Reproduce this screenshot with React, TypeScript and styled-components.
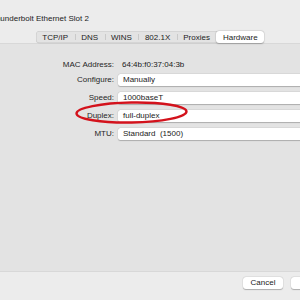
import * as React from 'react';
import styled, { createGlobalStyle } from 'styled-components';

const GlobalStyle = createGlobalStyle`
    html, body {
        margin: 0;
        padding: 0;
        background: #ececec;
        overflow: hidden;
    }
    body {
        font-family: "Liberation Sans", Arial, sans-serif;
    }
`;

const Viewport = styled.div`
    width: 300px;
    height: 300px;
    overflow: hidden;
    position: relative;
`;

// the sheet is wider than the shot: it is cut on both sides
const Sheet = styled.div`
    position: relative;
    width: 380px;
    height: 300px;
    margin-left: -40px;
    background: #ececec;
    display: flex;
    flex-direction: column;
`;

const TitleBar = styled.div`
    height: 31px;
    padding: 13px 0 0 31px;
    box-sizing: border-box;
    font-size: 8px;
    line-height: 12px;
    color: #222222;
    white-space: nowrap;
`;

const TabRow = styled.div`
    display: flex;
    justify-content: center;
    height: 13px;
    margin-bottom: -1px;
    position: relative;
    z-index: 1;
`;

const Segmented = styled.div`
    display: flex;
    align-items: center;
    height: 12px;
    background: #e3e3e3;
    border-radius: 3.5px;
    box-shadow: inset 0 0 0 0.5px rgba(0, 0, 0, 0.12), 0 0.5px 0.5px rgba(0, 0, 0, 0.08);
`;

const Segment = styled.div<{ $active?: boolean; $divider?: boolean }>`
    position: relative;
    height: 12px;
    padding: 0 6.5px;
    display: flex;
    align-items: center;
    font-size: 8px;
    color: #1c1c1c;
    border-radius: 3px;
    background: ${p => p.$active ? '#ffffff' : 'transparent'};
    box-shadow: ${p => p.$active ? '0 0.5px 1.5px rgba(0,0,0,0.22), 0 0 0 0.5px rgba(0,0,0,0.08)' : 'none'};

    &::before {
        content: "";
        display: ${p => p.$divider ? 'block' : 'none'};
        position: absolute;
        left: 0;
        top: 3px;
        width: 1px;
        height: 6px;
        background: #c9c9c9;
    }
`;

const Panel = styled.div`
    flex: 1;
    margin: 0 20px;
    background: #e3e3e3;
    border: 0.5px solid #d8d8d8;
    padding-top: 15px;
    box-sizing: border-box;
`;

const Form = styled.div`
    display: grid;
    grid-template-columns: 133px 1fr;
    column-gap: 4px;
    row-gap: 6px;
    align-items: center;
`;

const Label = styled.div<{ $tight?: boolean }>`
    text-align: right;
    font-size: 8px;
    line-height: 12px;
    color: #262626;
    margin-bottom: ${p => p.$tight ? '-3px' : '0'};
`;

const PlainValue = styled.div`
    font-size: 8px;
    line-height: 12px;
    color: #1a1a1a;
    padding-left: 4px;
    margin-bottom: -3px;
`;

const Field = styled.div`
    height: 12px;
    background: #ffffff;
    border-radius: 2.5px 0 0 2.5px;
    box-shadow: 0 0.5px 1px rgba(0, 0, 0, 0.22), 0 0 0 0.5px rgba(0, 0, 0, 0.05);
    font-size: 8px;
    line-height: 12px;
    color: #1a1a1a;
    padding-left: 5px;
    white-space: pre;
`;

const Footer = styled.div`
    height: 28px;
    display: flex;
    justify-content: flex-end;
    align-items: flex-start;
    gap: 8px;
    padding: 5px 9px 0 0;
    box-sizing: border-box;
`;

const Button = styled.div`
    width: 40px;
    height: 12px;
    background: #ffffff;
    border-radius: 3px;
    box-shadow: 0 0.5px 1px rgba(0, 0, 0, 0.25), 0 0 0 0.5px rgba(0, 0, 0, 0.06);
    font-size: 8px;
    line-height: 12px;
    text-align: center;
    color: #1a1a1a;
`;

const Annotation = styled.svg`
    position: absolute;
    left: 115px;
    top: 101px;
    overflow: visible;
    pointer-events: none;
`;

const tabs = ['TCP/IP', 'DNS', 'WINS', '802.1X', 'Proxies', 'Hardware'];
const active = 'Hardware';

const rows: { label: string; value: string }[] = [
    { label: 'Configure:', value: 'Manually' },
    { label: 'Speed:', value: '1000baseT' },
    { label: 'Duplex:', value: 'full-duplex' },
    { label: 'MTU:', value: 'Standard  (1500)' },
];

export default function App() {
    return (
        <Viewport>
            <GlobalStyle />
            <Sheet>
                <TitleBar>Thunderbolt Ethernet Slot 2</TitleBar>
                <TabRow>
                    <Segmented>
                        {tabs.map((t, i) => {
                            const prev = tabs[i - 1];
                            const divider = i > 0 && t !== active && prev !== active;
                            return <Segment key={t} $active={t === active} $divider={divider}>{t}</Segment>;
                        })}
                    </Segmented>
                </TabRow>
                <Panel>
                    <Form>
                        <Label $tight>MAC Address:</Label>
                        <PlainValue>64:4b:f0:37:04:3b</PlainValue>
                        {rows.map(r => (
                            <React.Fragment key={r.label}>
                                <Label>{r.label}</Label>
                                <Field>{r.value}</Field>
                            </React.Fragment>
                        ))}
                    </Form>
                </Panel>
                <Footer>
                    <Button>Cancel</Button>
                    <Button>OK</Button>
                </Footer>
                <Annotation width="113" height="23" viewBox="0 0 113 23">
                    <ellipse cx="56.5" cy="11.5" rx="55" ry="10" fill="none" stroke="#d3121c" strokeWidth="2.4" transform="rotate(-1 56.5 11.5)" />
                </Annotation>
            </Sheet>
        </Viewport>
    );
}
